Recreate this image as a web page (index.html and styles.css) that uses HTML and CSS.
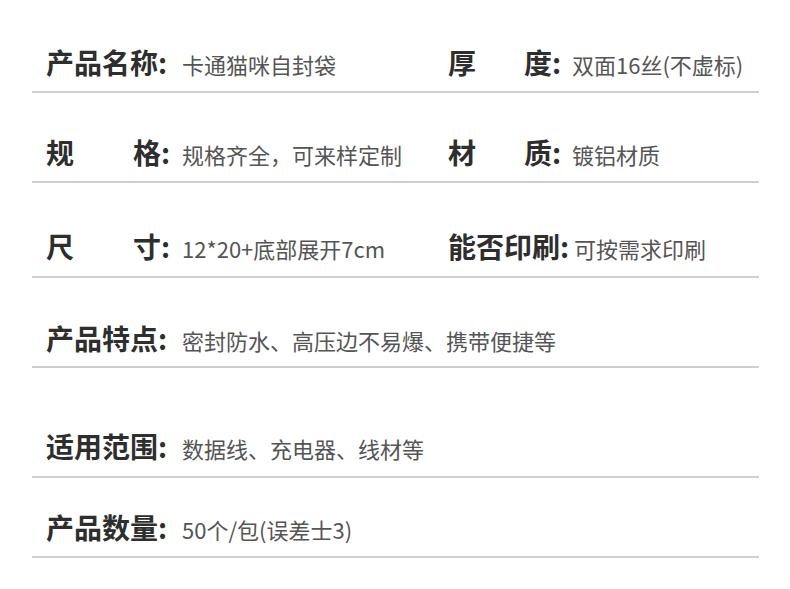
FILE: index.html
```html
<!DOCTYPE html>
<html lang="zh-CN">
<head>
<meta charset="utf-8">
<link rel="stylesheet" href="styles.css">
</head>
<body>
<div class="sheet">
  <div class="row r1">
    <div class="cell left">
      <span class="label">产品名称:</span><span class="value">卡通猫咪自封袋</span>
    </div>
    <div class="cell right">
      <span class="label split"><span>厚</span><span>度:</span></span><span class="value">双面16丝(不虚标)</span>
    </div>
  </div>
  <div class="row r2">
    <div class="cell left">
      <span class="label split"><span>规</span><span>格:</span></span><span class="value">规格齐全，可来样定制</span>
    </div>
    <div class="cell right">
      <span class="label split"><span>材</span><span>质:</span></span><span class="value">镀铝材质</span>
    </div>
  </div>
  <div class="row r3">
    <div class="cell left">
      <span class="label split"><span>尺</span><span>寸:</span></span><span class="value">12*20+底部展开7cm</span>
    </div>
    <div class="cell right">
      <span class="label wide">能否印刷:</span><span class="value">可按需求印刷</span>
    </div>
  </div>
  <div class="row r4">
    <div class="cell">
      <span class="label">产品特点:</span><span class="value">密封防水、高压边不易爆、携带便捷等</span>
    </div>
  </div>
  <div class="row r5">
    <div class="cell">
      <span class="label">适用范围:</span><span class="value">数据线、充电器、线材等</span>
    </div>
  </div>
  <div class="row r6">
    <div class="cell">
      <span class="label">产品数量:</span><span class="value">50个/包(误差士3)</span>
    </div>
  </div>
</div>
</body>
</html>
```

FILE: styles.css
```css
html, body {
  margin: 0;
  padding: 0;
  background: #ffffff;
}
body {
  font-family: "Noto Sans CJK SC", "Noto Sans", sans-serif;
  width: 790px;
  height: 589px;
  overflow: hidden;
}
.sheet {
  margin-left: 32px;
  width: 727px;
}
.row {
  display: flex;
  align-items: center;
  border-bottom: 2px solid #cfcfcf;
  padding-left: 14px;
}
.cell {
  display: flex;
  align-items: baseline;
  height: 36px;
  white-space: nowrap;
}
.left {
  width: 402px;
}
.right {
  flex: 1;
}
.label {
  font-size: 28px;
  font-weight: 700;
  color: #2e2e2e;
  width: 124px;
  margin-right: 12px;
  line-height: 36px;
  flex-shrink: 0;
}
.right .label {
  width: 113px;
  margin-right: 11px;
}
.right .label.wide {
  width: 120px;
  margin-right: 6px;
}
.split {
  display: inline-flex;
  justify-content: space-between;
}
.value {
  font-size: 22px;
  font-weight: 400;
  color: #555555;
  line-height: 36px;
}
.r1 { padding-top: 44px; padding-bottom: 11px; }
.r2 { padding-top: 41px; padding-bottom: 11px; }
.r3 { padding-top: 45px; padding-bottom: 12px; }
.r4 { padding-top: 42px; padding-bottom: 10px; }
.r5 { padding-top: 60px; padding-bottom: 12px; }
.r6 { padding-top: 31px; padding-bottom: 11px; }
```
